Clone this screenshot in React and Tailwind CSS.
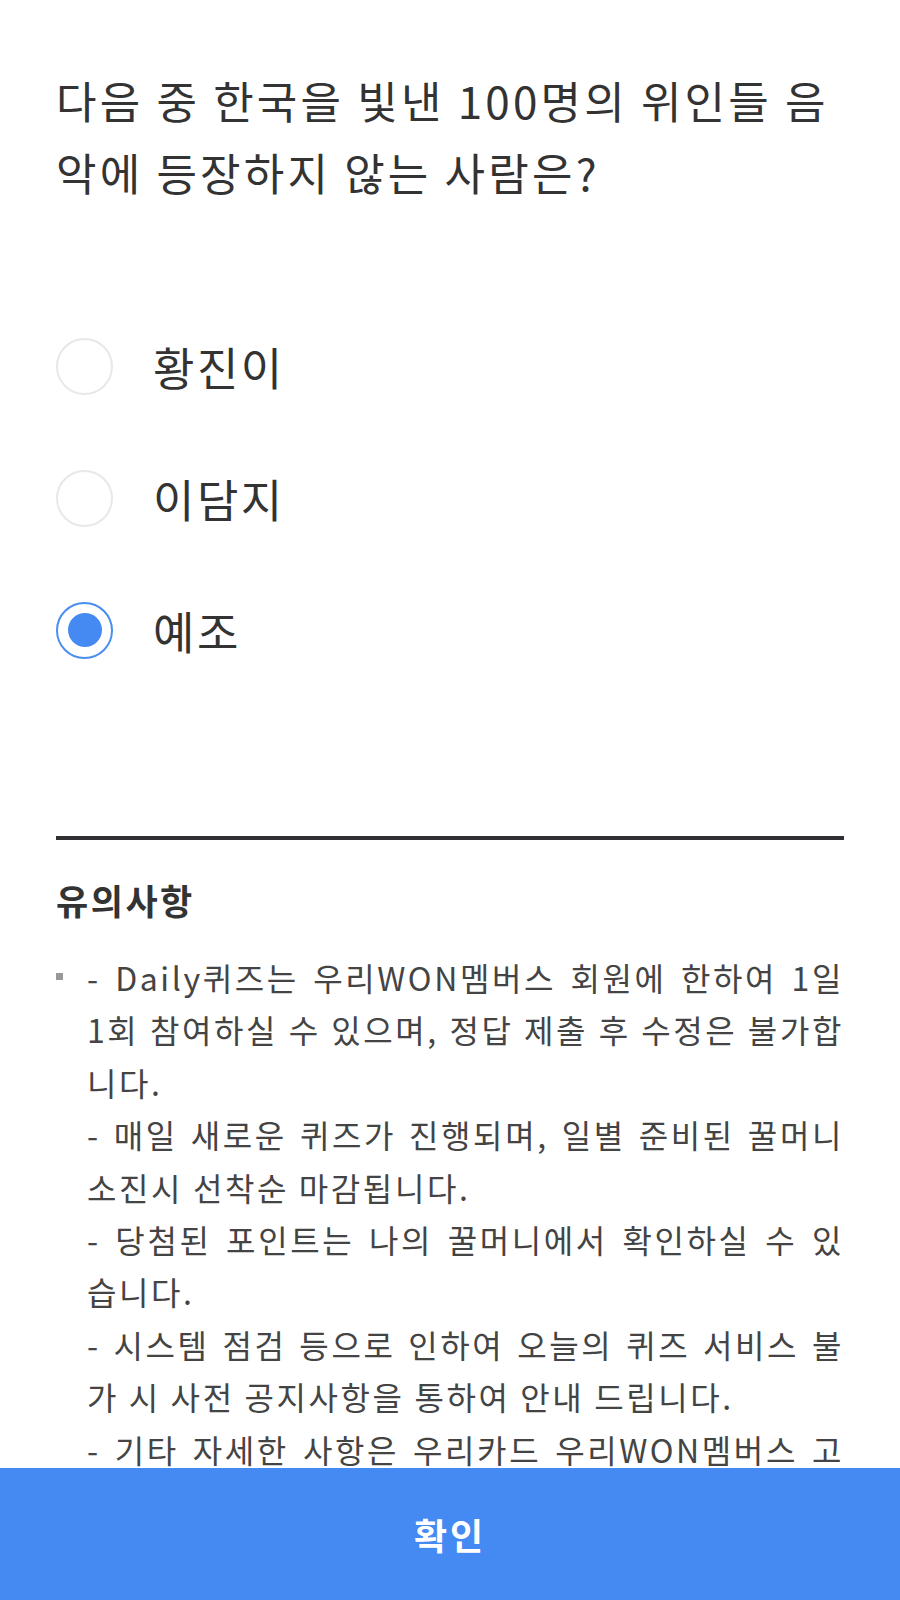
import React from "react";

const FONT = '"Noto Sans CJK KR", "Noto Sans", sans-serif';

function Radio({ checked }) {
  if (checked) {
    return (
      <div className="w-[57px] h-[57px] rounded-full border-2 border-[#4a8ff0] flex items-center justify-center shrink-0">
        <div className="w-[34px] h-[34px] rounded-full bg-[#4589f2]" />
      </div>
    );
  }
  return <div className="w-[57px] h-[57px] rounded-full border-2 border-[#e8e8e8] shrink-0" />;
}

const options = [
  { label: "황진이", checked: false },
  { label: "이담지", checked: false },
  { label: "예조", checked: true },
];

const notes = [
  { t: "- Daily퀴즈는 우리WON멤버스 회원에 한하여 1일", full: true },
  { t: "1회 참여하실 수 있으며, 정답 제출 후 수정은 불가합", full: true },
  { t: "니다.", full: false },
  { t: "- 매일 새로운 퀴즈가 진행되며, 일별 준비된 꿀머니", full: true },
  { t: "소진시 선착순 마감됩니다.", full: false },
  { t: "- 당첨된 포인트는 나의 꿀머니에서 확인하실 수 있", full: true },
  { t: "습니다.", full: false },
  { t: "- 시스템 점검 등으로 인하여 오늘의 퀴즈 서비스 불", full: true },
  { t: "가 시 사전 공지사항을 통하여 안내 드립니다.", full: false },
  { t: "- 기타 자세한 사항은 우리카드 우리WON멤버스 고", full: true },
];

export default function App() {
  return (
    <div className="relative w-full h-[1600px] overflow-hidden bg-white" style={{ fontFamily: FONT }}>
      <div className="px-[56px] pt-[64px]">
        <h1 className="text-[44px] leading-[72px] text-[#333] font-normal tracking-[3.2px]">
          <div className="whitespace-nowrap">다음 중 한국을 빛낸 100명의 위인들 음</div>
          <div className="whitespace-nowrap">악에 등장하지 않는 사람은?</div>
        </h1>

        <div className="mt-[92px] flex flex-col">
          {options.map((o) => (
            <div key={o.label} className="h-[132px] flex items-center gap-[40px]">
              <Radio checked={o.checked} />
              <span className="text-[45px] text-[#333] leading-none tracking-[2.5px]">{o.label}</span>
            </div>
          ))}
        </div>

        <div className="mt-[140px] h-[4px] bg-[#2f3033]" />

        <h2 className="mt-[35px] text-[35px] leading-[50px] font-bold text-[#333] tracking-[2.5px]">유의사항</h2>

        <div className="mt-[26px] flex">
          <div className="w-[31px] shrink-0 pt-[22px]">
            <div className="w-[7px] h-[7px] bg-[#999]" />
          </div>
          <div className="flex-1 text-[32px] leading-[52.4px] text-[#444] tracking-[2.6px]">
            {notes.map((n, i) => (
              <div
                key={i}
                className={n.full ? "whitespace-nowrap [text-align-last:justify] text-justify" : "whitespace-nowrap"}
              >
                {n.t}
              </div>
            ))}
          </div>
        </div>
      </div>

      <button className="absolute left-0 right-0 bottom-0 h-[132px] bg-[#4589f2] text-white text-[36px] font-bold tracking-[3px] flex items-center justify-center">
        확인
      </button>
    </div>
  );
}
